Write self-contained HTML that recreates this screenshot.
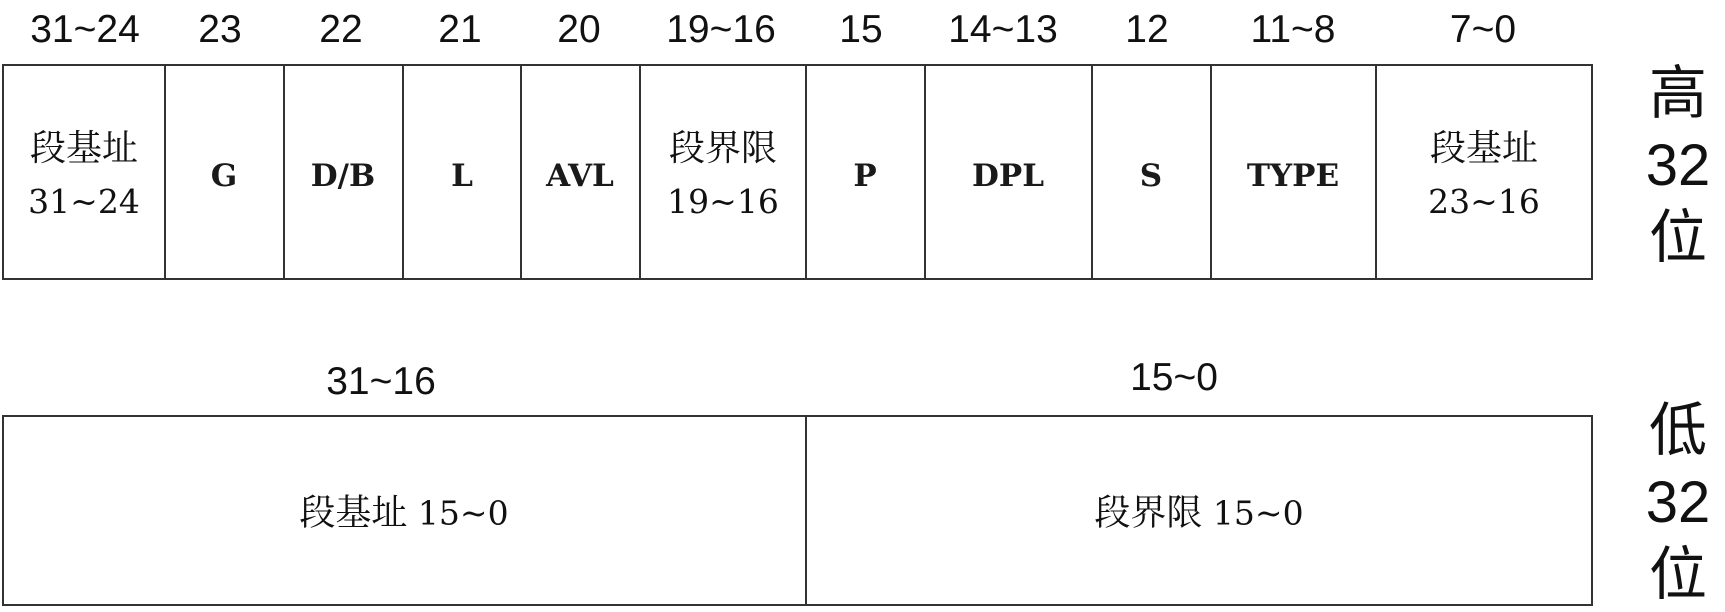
<!DOCTYPE html>
<html><head><meta charset="utf-8"><style>
body{margin:0;width:1725px;height:612px;background:#fff;position:relative;overflow:hidden}
.h{position:absolute;font-family:"Liberation Sans","Noto Sans CJK SC",sans-serif;font-size:39px;color:#111;transform:translate(-50%,-50%);white-space:nowrap}
.b{position:absolute;border:2px solid #333;box-sizing:border-box}
.v{position:absolute;width:2px;background:#333}
.c{position:absolute;font-family:"DejaVu Serif","Noto Serif CJK SC",serif;font-size:31px;font-weight:bold;color:#1a1a1a;transform:translate(-50%,-50%);white-space:nowrap;text-align:center;line-height:52px}
.c .z{font-family:"DejaVu Serif","Noto Serif CJK SC",serif;font-weight:normal;font-size:33px;color:#111}
.c .k{font-size:36px}
.r{position:absolute;font-family:"Liberation Sans","Noto Sans CJK SC",sans-serif;font-size:58px;color:#111;line-height:72px;left:1641px;width:74px;text-align:center}
</style></head><body>
<div class="h" style="left:85px;top:30px">31~24</div>
<div class="h" style="left:220px;top:30px">23</div>
<div class="h" style="left:341px;top:30px">22</div>
<div class="h" style="left:460px;top:30px">21</div>
<div class="h" style="left:579px;top:30px">20</div>
<div class="h" style="left:721px;top:30px">19~16</div>
<div class="h" style="left:861px;top:30px">15</div>
<div class="h" style="left:1003px;top:30px">14~13</div>
<div class="h" style="left:1147px;top:30px">12</div>
<div class="h" style="left:1293px;top:30px">11~8</div>
<div class="h" style="left:1483px;top:30px">7~0</div>

<div class="b" style="left:2px;top:64px;width:1591px;height:216px"></div>
<div class="v" style="left:164px;top:64px;height:216px"></div>
<div class="v" style="left:283px;top:64px;height:216px"></div>
<div class="v" style="left:402px;top:64px;height:216px"></div>
<div class="v" style="left:520px;top:64px;height:216px"></div>
<div class="v" style="left:639px;top:64px;height:216px"></div>
<div class="v" style="left:805px;top:64px;height:216px"></div>
<div class="v" style="left:924px;top:64px;height:216px"></div>
<div class="v" style="left:1091px;top:64px;height:216px"></div>
<div class="v" style="left:1210px;top:64px;height:216px"></div>
<div class="v" style="left:1375px;top:64px;height:216px"></div>

<div class="c" style="left:84px;top:176px"><span class="z k">段基址</span><br><span class="z">31~24</span></div>
<div class="c" style="left:224px;top:176px">G</div>
<div class="c" style="left:343px;top:176px">D/B</div>
<div class="c" style="left:462px;top:176px">L</div>
<div class="c" style="left:580px;top:176px">AVL</div>
<div class="c" style="left:723px;top:176px"><span class="z k">段界限</span><br><span class="z">19~16</span></div>
<div class="c" style="left:865px;top:176px">P</div>
<div class="c" style="left:1008px;top:176px">DPL</div>
<div class="c" style="left:1151px;top:176px">S</div>
<div class="c" style="left:1293px;top:176px">TYPE</div>
<div class="c" style="left:1484px;top:176px"><span class="z k">段基址</span><br><span class="z">23~16</span></div>

<div class="h" style="left:381px;top:382px">31~16</div>
<div class="h" style="left:1174px;top:378px">15~0</div>
<div class="b" style="left:2px;top:415px;width:1591px;height:191px"></div>
<div class="v" style="left:805px;top:415px;height:191px"></div>
<div class="c" style="left:404px;top:514px"><span class="z k">段基址</span><span class="z"> 15~0</span></div>
<div class="c" style="left:1199px;top:514px"><span class="z k">段界限</span><span class="z"> 15~0</span></div>

<div class="r" style="top:58px">高<br>32<br>位</div>
<div class="r" style="top:395px">低<br>32<br>位</div>
</body></html>
